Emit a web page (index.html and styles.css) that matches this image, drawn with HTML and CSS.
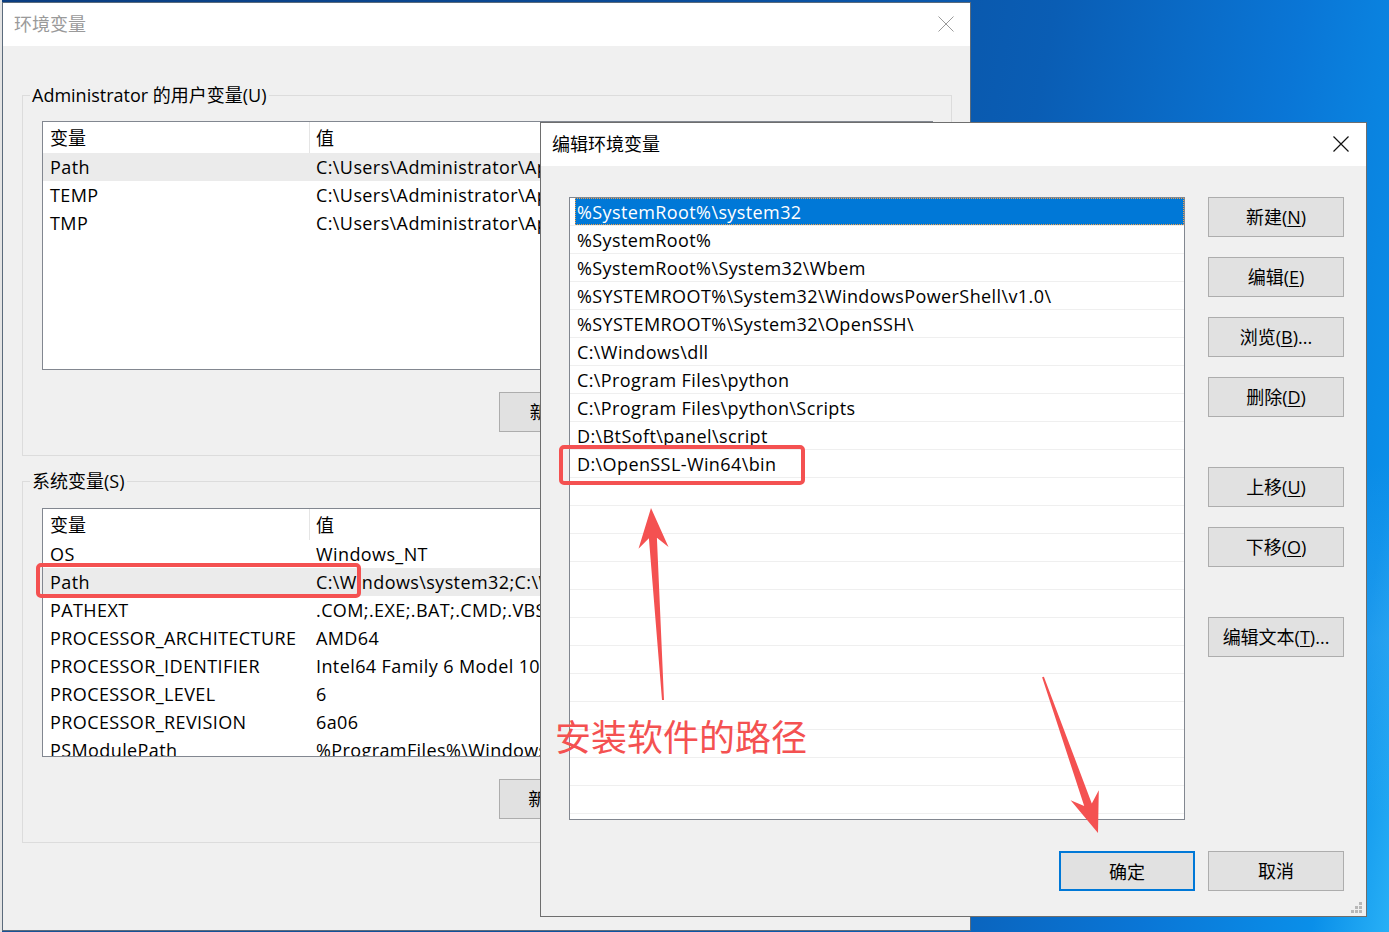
FILE: index.html
```html
<!DOCTYPE html>
<html lang="zh-CN">
<head>
<meta charset="utf-8">
<title>编辑环境变量</title>
<link rel="stylesheet" href="styles.css">
</head>
<body>
<div class="desktop">

  <section class="win win-back">
    <header class="titlebar">
      <span class="title">环境变量</span>
      <svg class="close" width="16" height="16" viewBox="0 0 16 16"><path d="M0.5 0.5L15.5 15.5M15.5 0.5L0.5 15.5" stroke="currentColor" stroke-width="1" fill="none"/></svg>
    </header>
    <div class="win-body">
      <fieldset class="group">
        <legend>Administrator 的用户变量(U)</legend>
        <div class="lv">
          <div class="lv-head"><span class="c1">变量</span><span class="c2">值</span></div>
          <div class="lv-row sel"><span class="c1">Path</span><span class="c2">C:\Users\Administrator\AppData\Local\Microsoft\WindowsApps;</span></div>
          <div class="lv-row"><span class="c1">TEMP</span><span class="c2">C:\Users\Administrator\AppData\Local\Temp</span></div>
          <div class="lv-row"><span class="c1">TMP</span><span class="c2">C:\Users\Administrator\AppData\Local\Temp</span></div>
        </div>
        <div class="btn-row">
          <button class="btn">新建(<u>N</u>)...</button>
          <button class="btn">编辑(<u>E</u>)...</button>
          <button class="btn">删除(<u>D</u>)</button>
        </div>
      </fieldset>

      <fieldset class="group group-sys">
        <legend>系统变量(S)</legend>
        <div class="lv">
          <div class="lv-head"><span class="c1">变量</span><span class="c2">值</span></div>
          <div class="lv-row"><span class="c1">OS</span><span class="c2">Windows_NT</span></div>
          <div class="lv-row sel"><span class="c1">Path</span><span class="c2">C:\Windows\system32;C:\Windows;C:\Windows\System32\Wbem;</span></div>
          <div class="lv-row"><span class="c1">PATHEXT</span><span class="c2">.COM;.EXE;.BAT;.CMD;.VBS;.VBE;.JS;.JSE;.WSF;.WSH;.MSC</span></div>
          <div class="lv-row"><span class="c1">PROCESSOR_ARCHITECTURE</span><span class="c2">AMD64</span></div>
          <div class="lv-row"><span class="c1">PROCESSOR_IDENTIFIER</span><span class="c2">Intel64 Family 6 Model 106 Stepping 6, GenuineIntel</span></div>
          <div class="lv-row"><span class="c1">PROCESSOR_LEVEL</span><span class="c2">6</span></div>
          <div class="lv-row"><span class="c1">PROCESSOR_REVISION</span><span class="c2">6a06</span></div>
          <div class="lv-row"><span class="c1">PSModulePath</span><span class="c2">%ProgramFiles%\WindowsPowerShell\Modules</span></div>
        </div>
        <div class="btn-row">
          <button class="btn">新建(<u>W</u>)...</button>
          <button class="btn">编辑(<u>I</u>)...</button>
          <button class="btn">删除(<u>L</u>)</button>
        </div>
      </fieldset>

      <div class="btn-row dlg-row">
        <button class="btn">确定</button>
        <button class="btn">取消</button>
      </div>
    </div>
  </section>

  <section class="win win-edit">
    <header class="titlebar">
      <span class="title">编辑环境变量</span>
      <svg class="close" width="16" height="16" viewBox="0 0 16 16"><path d="M0.5 0.5L15.5 15.5M15.5 0.5L0.5 15.5" stroke="currentColor" stroke-width="1.2" fill="none"/></svg>
    </header>
    <div class="edit-body">
      <div class="edit-main">
        <div class="elist">
          <div class="eitem sel"><span class="txt">%SystemRoot%\system32</span></div>
          <div class="eitem"><span class="txt">%SystemRoot%</span></div>
          <div class="eitem"><span class="txt">%SystemRoot%\System32\Wbem</span></div>
          <div class="eitem"><span class="txt">%SYSTEMROOT%\System32\WindowsPowerShell\v1.0\</span></div>
          <div class="eitem"><span class="txt">%SYSTEMROOT%\System32\OpenSSH\</span></div>
          <div class="eitem"><span class="txt">C:\Windows\dll</span></div>
          <div class="eitem"><span class="txt">C:\Program Files\python</span></div>
          <div class="eitem"><span class="txt">C:\Program Files\python\Scripts</span></div>
          <div class="eitem"><span class="txt">D:\BtSoft\panel\script</span></div>
          <div class="eitem"><span class="txt">D:\OpenSSL-Win64\bin</span></div>
          <div class="eitem"></div><div class="eitem"></div><div class="eitem"></div><div class="eitem"></div>
          <div class="eitem"></div><div class="eitem"></div><div class="eitem"></div><div class="eitem"></div>
          <div class="eitem"></div><div class="eitem"></div><div class="eitem"></div><div class="eitem"></div>
        </div>
        <div class="ecol">
          <button class="btn">新建(<u>N</u>)</button>
          <button class="btn">编辑(<u>E</u>)</button>
          <button class="btn">浏览(<u>B</u>)...</button>
          <button class="btn">删除(<u>D</u>)</button>
          <button class="btn sep">上移(<u>U</u>)</button>
          <button class="btn">下移(<u>O</u>)</button>
          <button class="btn sep">编辑文本(<u>T</u>)...</button>
        </div>
      </div>
      <div class="btn-row edit-foot">
        <button class="btn default">确定</button>
        <button class="btn">取消</button>
      </div>
    </div>
    <svg class="grip" width="12" height="12" viewBox="0 0 12 12">
      <rect x="8" y="0" width="3" height="3" fill="#b8b8b8"/>
      <rect x="4" y="4" width="3" height="3" fill="#b8b8b8"/>
      <rect x="8" y="4" width="3" height="3" fill="#b8b8b8"/>
      <rect x="0" y="8" width="3" height="3" fill="#b8b8b8"/>
      <rect x="4" y="8" width="3" height="3" fill="#b8b8b8"/>
      <rect x="8" y="8" width="3" height="3" fill="#b8b8b8"/>
    </svg>
  </section>

  <div class="annot">
    <svg class="annot-svg" width="1389" height="932" viewBox="0 0 1389 932">
      <rect x="38" y="565" width="321" height="31" rx="3" fill="none" stroke="#f45151" stroke-width="4"/>
      <rect x="561" y="447" width="242" height="36" rx="3" fill="none" stroke="#f45151" stroke-width="4"/>
      <polygon fill="#f45151" points="651,508 668.5,547 656.9,537.7 664,700 662,700 648.9,538.2 638.5,548.8"/>
      <polygon fill="#f45151" points="1098,833 1098.8,790.3 1091.8,803.4 1043.9,676.7 1042.1,677.3 1084.2,806 1070.6,800.3"/>
    </svg>
    <div class="note">安装软件的路径</div>
  </div>
</div>
</body>
</html>
```

FILE: styles.css
```css
* { box-sizing: border-box; }

html, body {
  margin: 0;
  padding: 0;
}

body {
  width: 1389px;
  height: 932px;
  overflow: hidden;
  font-family: "Open Sans", "Noto Sans CJK SC", sans-serif;
  font-size: 18px;
  color: #000;
  background:
    linear-gradient(to right, #e4e4e4 0 2px, transparent 2px),
    linear-gradient(170deg, rgba(255,255,255,0) 0 60%, rgba(120,200,255,0.18) 75%, rgba(255,255,255,0) 90%),
    linear-gradient(100deg, #0a3d80 0%, #0a4a96 40%, #0a5db4 68%, #0a76d6 84%, #0a8fe9 95%, #28b0f6 100%);
}

.desktop {
  position: relative;
  width: 1389px;
  height: 932px;
}

/* ---------- windows ---------- */
.win {
  position: absolute;
  display: flex;
  flex-direction: column;
  background: #f0f0f0;
}

.win-back {
  left: 2px;
  top: 2px;
  width: 969px;
  height: 929px;
  border: 1px solid #5b6b7c;
}

.win-edit {
  left: 540px;
  top: 122px;
  width: 827px;
  height: 795px;
  border: 1px solid #6e6e6e;
}

.titlebar {
  flex: 0 0 43px;
  height: 43px;
  background: #fff;
  display: flex;
  align-items: center;
  justify-content: space-between;
  padding: 0 0 2px 11px;
}

.title {
  font-size: 18px;
  line-height: 24px;
}

.win-back .title { color: #9a9a9a; }
.win-back .close { color: #9a9a9a; margin-right: 16px; }

.win-edit .title { color: #000; }
.win-edit .close { color: #111; margin-right: 17px; }

/* ---------- back window body ---------- */
.win-body {
  display: flex;
  flex-direction: column;
  padding: 0 18px 0 19px;
}

.group {
  margin: 37px 0 0;
  padding: 14px 18px 23px 19px;
  border: 1px solid #dcdcdc;
  min-width: 0;
}

.group-sys {
  margin-top: 13px;
  padding-top: 15px;
}

.group legend {
  padding: 0 2px;
  margin-left: -12px;
  font-size: 18px;
  line-height: 24px;
}

.lv {
  height: 249px;
  border: 1px solid #828790;
  background: #fff;
  overflow: hidden;
}

.lv-head,
.lv-row {
  display: flex;
  white-space: nowrap;
}

.lv-head {
  height: 31px;
  padding-top: 2px;
  line-height: 29px;
}

.lv-head .c1 {
  margin-top: -2px;
  padding-top: 2px;
}

.lv-row {
  height: 28px;
  line-height: 28px;
  letter-spacing: 0.4px;
}

.lv-row.sel {
  background: #ebebeb;
}

.c1 {
  flex: 0 0 267px;
  padding-left: 7px;
  overflow: hidden;
}

.lv-head .c1 {
  border-right: 1px solid #e5e5e5;
}

.c2 {
  flex: 1;
  padding-left: 6px;
  overflow: hidden;
}

.btn-row {
  display: flex;
  justify-content: flex-end;
  gap: 13px;
  margin-top: 22px;
}

.dlg-row {
  margin-top: 20px;
}

.btn {
  width: 136px;
  height: 40px;
  padding: 0;
  margin: 0;
  background: #e1e1e1;
  border: 1px solid #adadad;
  border-radius: 0;
  font-family: inherit;
  font-size: 18px;
  line-height: 38px;
  color: #000;
  white-space: nowrap;
}

.btn u {
  text-underline-offset: 2px;
}

.btn.default {
  border: 2px solid #0078d7;
}

/* ---------- edit dialog body ---------- */
.edit-body {
  flex: 1;
  display: flex;
  flex-direction: column;
  padding: 31px 22px 25px 28px;
}

.edit-main {
  display: flex;
  gap: 23px;
  height: 623px;
}

.elist {
  width: 616px;
  height: 623px;
  border: 1px solid #828790;
  background: #fff;
  overflow: hidden;
}

.eitem {
  height: 28px;
  border-bottom: 1px solid #efefef;
  padding-left: 5px;
  white-space: nowrap;
}

.eitem .txt {
  display: block;
  height: 27px;
  line-height: 28px;
  padding-left: 2px;
  letter-spacing: 0.4px;
}

.eitem.sel .txt {
  background: #0078d7;
  color: #fff;
  outline: 1px dotted #f0a04a;
  outline-offset: -1px;
}

.ecol {
  display: flex;
  flex-direction: column;
  gap: 20px;
  width: 136px;
}

.ecol .sep {
  margin-top: 30px;
}

.edit-foot {
  margin-top: 31px;
}

.grip {
  position: absolute;
  right: 3px;
  bottom: 2px;
}

/* ---------- annotations ---------- */
.annot {
  position: absolute;
  inset: 0;
  pointer-events: none;
}

.annot-svg {
  position: absolute;
  left: 0;
  top: 0;
}

.note {
  position: absolute;
  left: 555px;
  top: 713px;
  font-family: "Noto Sans CJK SC", sans-serif;
  font-size: 36px;
  line-height: 44px;
  color: #f45151;
}
```
